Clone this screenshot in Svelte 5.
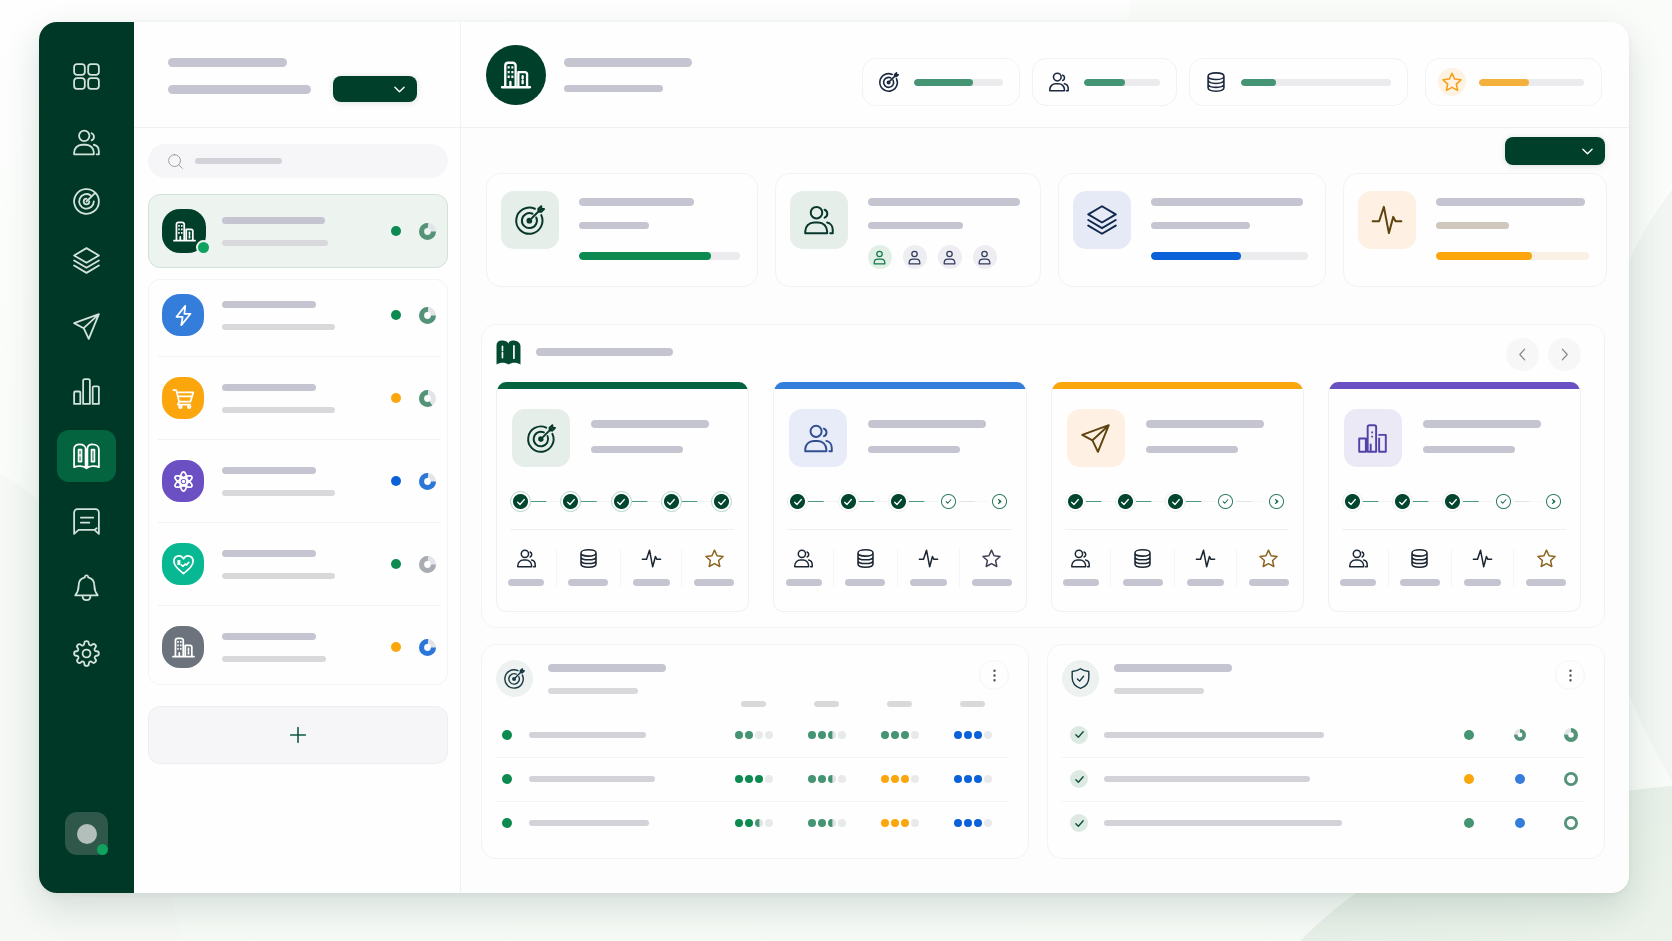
<script lang="ts">
    type Shape = { d: string, fill?: string };

    //All icons share a 24x24 box. d is stroked, fill is painted solid
    const icons: Record<string, Shape> = {
        grid: { d: "M3.500 1h4.500a2.500 2.500 0 0 1 2.500 2.500v4.500a2.500 2.500 0 0 1-2.500 2.500H3.500A2.500 2.500 0 0 1 1 8V3.500A2.500 2.500 0 0 1 3.500 1zM16 1h4.500A2.500 2.500 0 0 1 23 3.500V8a2.500 2.500 0 0 1-2.500 2.500H16A2.500 2.500 0 0 1 13.500 8V3.500A2.500 2.500 0 0 1 16 1zM3.500 13.500H8a2.500 2.500 0 0 1 2.500 2.500v4.500A2.500 2.500 0 0 1 8 23H3.500A2.500 2.500 0 0 1 1 20.500V16a2.500 2.500 0 0 1 2.500-2.500zM16 13.500h4.500A2.500 2.500 0 0 1 23 16v4.500a2.500 2.500 0 0 1-2.500 2.500H16a2.500 2.500 0 0 1-2.500-2.500V16a2.500 2.500 0 0 1 2.500-2.500z" },
        users: { d: "M10 1.500a4.500 4.500 0 0 1 0 9.200 4.500 4.500 0 0 1 0-9.200zM1 22.500v-1.500c0-4 3.200-7 7-7h3.500c3.800 0 7 3 7 7v1.500zM16.500 3.800a3.400 3.400 0 0 1 0 6.300M18.500 14c2.700.5 4.500 3 4.500 6v2.500h-2" },
        user: { d: "M12 2a4.300 4.300 0 0 1 0 8.600A4.300 4.300 0 0 1 12 2zM3.500 22v-1.500c0-3.600 2.700-6 6-6h5c3.300 0 6 2.400 6 6V22z" },
        radar: { d: "M19.800 4.200A11 11 0 1 0 23 12c0-3-1.200-5.800-3.200-7.800zM15.500 6.400A6.500 6.500 0 1 0 18.500 12M12 12l7.500-7.500M12 9.500a2.500 2.500 0 1 0 2.500 2.500" },
        target: { d: "M15.900 3A10.500 10.500 0 1 0 21 8.100M14 7A6 6 0 1 0 17 10M11.500 11a1.500 1.500 0 1 0 1.500 1.500M11.500 12.500L20 4M18.700 5.200V3L21 1v2.200h2.200L21 5.400z" },
        layers: { d: "M12 1l11 6.500L12 14 1 7.500zM1 12l11 6.500L23 12M1 16.500L12 23l11-6.500" },
        send: { d: "M23 1l-9 22-4.500-9.500L1 9zM23 1L9.500 13.500" },
        chart: { d: "M2 12h3.500a1 1 0 0 1 1 1v10H1V13a1 1 0 0 1 1-1zM10.500 1h3A1.500 1.500 0 0 1 15 2.500V23H9V2.500A1.500 1.500 0 0 1 10.500 1zM18.500 7.500H22a1 1 0 0 1 1 1V23h-5.500V8.500a1 1 0 0 1 1-1z" },
        towers: { d: "M1 12h5.500v11H1zM8 23V2.500A1.500 1.500 0 0 1 9.500 1h4A1.500 1.500 0 0 1 15 2.500V23h-4M8 23h2.500v-6M17.500 9H23v14h-5.500V12", fill: "M11 6.200h1.400v1.400H11zM11 9.800h1.400v1.400H11z" },
        book: { d: "M1 21.500V5c0-2.300 2-3.800 5-3.800S11.200 3 11.200 5v16M12.800 21V5c0-2.300 1.700-3.800 4.500-3.800C20.500 1.200 23 3 23 5.500v16c-3-1.300-8-1.500-11 1-3-2.500-8-2.300-11-1M5 6h2.500v10.500H5zM16.500 6H19v10.500h-2.500z", fill: "M5.500 10h1.500v2H5.500z" },
        bookSolid: { d: "M6.200 6v4M6.200 12v5M17.200 5.500v12", fill: "M.5 23.500V5C.5 2 2.500.5 5.500.5s6 1 6.300 3.200C12.300 1.500 14 .5 16.500.5c3.500 0 7 2 7 5.500v17.500c-3.500-2-8-2.200-11.500 0-3.500-2.200-8-2-11.500 0z" },
        message: { d: "M1 23V4a3 3 0 0 1 3-3h16a3 3 0 0 1 3 3v19l-4-3.500H5zM7 8.500h11M7 13h7.500M19 19.500l2-1.500" },
        bell: { d: "M12 1.200a1.500 1.500 0 0 1 1.500 1.800c3.500.8 5.500 3.500 5.500 7.500 0 4.500 1 6 3 8.500H2c2-2.500 3-4 3-8.500C5 6.500 7 3.800 10.500 3A1.500 1.500 0 0 1 12 1.200zM8.500 19.500c0 5 7 5 7 0" },
        gear: { d: "M12 8.500a3.500 3.500 0 0 1 0 7 3.500 3.500 0 0 1 0-7zM19.400 15a1.650 1.650 0 0 0 .33 1.820l.06.06a2 2 0 0 1-2.830 2.830l-.06-.06a1.650 1.650 0 0 0-2.820 1.180V21a2 2 0 0 1-4 0v-.09A1.650 1.650 0 0 0 7.180 19.730l-.06.06a2 2 0 0 1-2.830-2.830l.06-.06A1.650 1.650 0 0 0 3.170 14H3a2 2 0 0 1 0-4h.09A1.650 1.650 0 0 0 4.270 7.180l-.06-.06a2 2 0 0 1 2.830-2.830l.06.06A1.650 1.650 0 0 0 10 3.090V3a2 2 0 0 1 4 0v.09a1.650 1.650 0 0 0 2.820 1.180l.06-.06a2 2 0 0 1 2.830 2.830l-.06.06A1.650 1.650 0 0 0 20.910 10H21a2 2 0 0 1 0 4h-.09a1.650 1.650 0 0 0-1.510 1z" },
        building: { d: "M0 22.500h24M2.800 22V4a2.500 2.500 0 0 1 2.500-2.500h3.900A2.500 2.500 0 0 1 11.700 4v18M14 22V9.500h5.500a2 2 0 0 1 2 2V22M17.700 13v2M17.700 17v2M7.200 18v3", fill: "M4.800 4.500h1.800v2H4.800zM8 4.500h1.800v2H8zM4.800 8.500h1.800v2H4.800zM8 8.500h1.800v2H8zM4.800 12.500h1.800v2H4.800zM8 12.500h1.800v2H8z" },
        bolt: { d: "M14 1L4 13.500h7L9.500 23 20 10h-7z" },
        cart: { d: "M.5 2.500h3.200L7 15.500h13L23.200 5H4.300M5.500 9.500h16M7 15.500L5.500 19h14M8.500 20a1.500 1.500 0 0 1 0 3 1.500 1.500 0 0 1 0-3zM18.500 20a1.500 1.500 0 0 1 0 3 1.500 1.500 0 0 1 0-3z" },
        atom: { d: "M12 1a4 11 0 0 1 0 22 4 11 0 0 1 0-22M21.530 6.500A4 11 60 0 1 2.470 17.500 4 11 60 0 1 21.530 6.500M21.530 17.500A4 11 120 0 1 2.470 6.500 4 11 120 0 1 21.530 17.500", fill: "M12 10a2 2 0 0 1 0 4 2 2 0 0 1 0-4z" },
        heart: { d: "M12 22.500C5 16.500 1 13 1 8.300 1 1.500 9 .2 12 5.500 15 .2 23 1.500 23 8.300c0 4.700-4 8.200-11 14.200zM9.500 12.500l2 1.500 2.500-2.500 1.500 1 2.500-3", fill: "M5 7h3.500v5.500H5z" },
        database: { d: "M12 1c5.500 0 9.500 1.500 9.500 4S17.500 9 12 9 2.500 7.500 2.500 5 6.500 1 12 1zM2.500 5v14c0 2.500 4 4 9.500 4s9.500-1.500 9.500-4V5M2.500 9.700c0 2.500 4 4 9.500 4s9.500-1.500 9.500-4M2.500 14.400c0 2.500 4 4 9.500 4s9.500-1.500 9.500-4" },
        star: { d: "M12 1.500l3.200 7 7.600.9-5.600 5.200 1.500 7.500L12 18.400l-6.700 3.700 1.500-7.500L1.200 9.400l7.600-.9z" },
        pulse: { d: "M.5 13h5.200L9.500 1.500 13.500 22.500l3.500-13 1.800 3.500h4.700" },
        shield: { d: "M12 .8c3 2.200 6 3 9.500 3.200V11c0 6-3.500 10-9.500 12.300C6 21 2.500 17 2.500 11V4C6 3.800 9 3 12 .8zM8.500 12.500l2.500 2.500 4.500-5.500" },
        search: { d: "M10.500 1a9.500 9.500 0 0 1 0 19 9.500 9.500 0 0 1 0-19zM17.500 17.500L23 23" },
        plus: { d: "M12 1v22M1 12h22" },
        down: { d: "M2 7l10 10L22 7" },
        left: { d: "M16 2L7 12l9 10" },
        right: { d: "M8 2l9 10-9 10" },
        play: { d: "M8 5l9 7-9 7", fill: "M8 4l9 8-9 8 3-8z" },
        check: { d: "M4 12.500l5.500 5.500L20 6" },
        dots: { d: "", fill: "M12 1a2.200 2.200 0 0 1 0 4.400A2.200 2.200 0 0 1 12 1zM12 9.800a2.200 2.200 0 0 1 0 4.400 2.200 2.200 0 0 1 0-4.400zM12 18.600a2.200 2.200 0 0 1 0 4.400 2.200 2.200 0 0 1 0-4.400z" }
    };

    const navGroups: { tight: boolean, items: string[] }[] = [
        { tight: false, items: ["grid"] },
        { tight: true, items: ["users", "radar", "layers"] },
        { tight: false, items: ["send", "chart", "book", "message"] },
        { tight: false, items: ["bell"] },
        { tight: false, items: ["gear"] }
    ];
    let activeNav = $state("book");

    const accounts = [
        { icon: "bolt", color: "blue", sub: 113, status: "green", ring: "sage", share: 75 },
        { icon: "cart", color: "amber", sub: 113, status: "amber", ring: "sage", share: 60 },
        { icon: "atom", color: "violet", sub: 113, status: "royal", ring: "blue", share: 75 },
        { icon: "heart", color: "teal", sub: 113, status: "green", ring: "grey", share: 75 },
        { icon: "building", color: "slate", sub: 104, status: "amber", ring: "blue", share: 75 }
    ];

    const chips = [
        { icon: "target", value: 66, color: "sage" },
        { icon: "users", value: 53, color: "sage" },
        { icon: "database", value: 23, color: "sage" },
        { icon: "star", value: 48, color: "sun" }
    ];

    const stats = [
        { icon: "target", tint: "mint", title: 115, sub: 70, value: 82, color: "green" },
        { icon: "users", tint: "mint", title: 152, sub: 95, value: 0, color: "" },
        { icon: "layers", tint: "sky", title: 152, sub: 99, value: 57, color: "royal" },
        { icon: "pulse", tint: "peach", title: 149, sub: 73, value: 63, color: "amber" }
    ];

    const modules = [
        { icon: "target", tint: "mint", edge: "forest", done: 5, star: "gold" },
        { icon: "users", tint: "iris", edge: "blue", done: 3, star: "plum" },
        { icon: "send", tint: "peach", edge: "amber", done: 3, star: "gold" },
        { icon: "towers", tint: "lilac", edge: "violet", done: 3, star: "gold" }
    ];
    const metrics = [
        { icon: "users", width: 36 },
        { icon: "database", width: 40 },
        { icon: "pulse", width: 37 },
        { icon: "star", width: 40 }
    ];

    //Each score is a colour and how many of the four dots are lit, .5 lights half a dot
    const scores = [
        { width: 117, cells: [["sage", 2], ["sage", 2.5], ["sage", 3], ["royal", 3]] },
        { width: 126, cells: [["green", 3], ["sage", 2.5], ["amber", 3], ["royal", 3]] },
        { width: 120, cells: [["green", 2.5], ["sage", 2.5], ["amber", 3], ["royal", 3]] }
    ] as { width: number, cells: [string, number][] }[];

    const checks = [
        { width: 220, dot: "sage", second: "ring", share: 75 },
        { width: 206, dot: "amber", second: "blue", share: 100 },
        { width: 238, dot: "sage", second: "blue", share: 100 }
    ];

    function dotClass(color: string, lit: number, index: number) {
        if (index + 1 <= lit) return "pip bg-" + color;
        if (index < lit) return "pip half";
        return "pip";
    }
</script>

{#snippet icon(name: string, size: number)}
    <svg class="icon" width={size} height={size} viewBox="0 0 24 24" aria-hidden="true">
        {#if icons[name].fill}<path class="solid" d={icons[name].fill} />{/if}
        <path class="line" d={icons[name].d} />
    </svg>
{/snippet}

{#snippet bar(width: number, size: string)}
    <span class="bar {size}" style:width={width + "px"}></span>
{/snippet}

{#snippet meter(value: number, color: string, size: string)}
    <span class="meter {size}"><span class="bg-{color}" style:width={value + "%"}></span></span>
{/snippet}

{#snippet ring(color: string, share: number, size: number, thick: number, fromTop: boolean)}
    <svg class="ring ring-{color}" class:from-top={fromTop} width={size} height={size} viewBox="0 0 20 20" aria-hidden="true">
        <circle class="track" cx="10" cy="10" r={10 - thick / 2} stroke-width={thick} />
        <circle cx="10" cy="10" r={10 - thick / 2} stroke-width={thick} pathLength="100"
            stroke-dasharray="{share} 100" stroke-dashoffset={fromTop ? 0 : share - 75} />
    </svg>
{/snippet}

{#snippet picker(label: string)}
    <label class="picker">
        <select aria-label={label}><option value=""></option></select>
        {@render icon("down", 11)}
    </label>
{/snippet}

<svg class="backdrop" viewBox="0 0 1672 941" preserveAspectRatio="none" aria-hidden="true">
    <defs>
        <linearGradient id="page" x1="0" y1="0" x2="0" y2="1">
            <stop offset="0" stop-color="#fdfefd" />
            <stop offset="1" stop-color="#f6faf6" />
        </linearGradient>
        <linearGradient id="hill" x1="0" y1="0" x2="1" y2="1">
            <stop offset="0" stop-color="#e2ece5" />
            <stop offset="1" stop-color="#ebf3ea" />
        </linearGradient>
    </defs>
    <rect width="1672" height="941" fill="url(#page)" />
    <path d="M1130 0C1124 60 1150 180 1300 300S1560 420 1672 180V0z" fill="#fafcf9" />
    <path d="M1672 190C1560 330 1560 600 1672 780z" fill="#f1f6f3" />
    <path d="M0 474C60 500 120 600 180 941H0z" fill="#f5f8f5" />
    <path d="M1300 941C1380 860 1500 800 1672 786V941z" fill="url(#hill)" />
</svg>

<div class="window">
    <nav class="rail">
        {#each navGroups as group}
            <div class="rail-group" class:tight={group.tight}>
                {#each group.items as item}
                    <button class:active={activeNav == item} aria-label={item} onclick={() => activeNav = item}>
                        {@render icon(item, 27)}
                    </button>
                {/each}
            </div>
        {/each}
        <button class="profile" aria-label="Profile"><span class="face"></span><span class="online"></span></button>
    </nav>

    <aside class="side">
        <header class="side-head">
            <div class="stack wide">
                {@render bar(119, "xl")}
                {@render bar(143, "xl")}
            </div>
            {@render picker("Workspace")}
        </header>

        <div class="side-body">
            <label class="search">
                {@render icon("search", 15)}
                {@render bar(87, "sm mid")}
                <input type="search" aria-label="Search" />
            </label>

            <button class="account selected" aria-label="Current account">
                <span class="logo bg-pine">{@render icon("building", 21)}<span class="online"></span></span>
                <span class="stack">
                    {@render bar(103, "md")}
                    {@render bar(106, "sm pale")}
                </span>
                <span class="dot bg-green"></span>
                {@render ring("sage", 75, 17, 6, false)}
            </button>

            <div class="accounts">
                {#each accounts as account}
                    <button class="account" aria-label={account.icon}>
                        <span class="logo bg-{account.color}">{@render icon(account.icon, 21)}</span>
                        <span class="stack">
                            {@render bar(94, "md")}
                            {@render bar(account.sub, "sm pale")}
                        </span>
                        <span class="dot bg-{account.status}"></span>
                        {@render ring(account.ring, account.share, 17, 6, false)}
                    </button>
                {/each}
            </div>

            <button class="add" aria-label="Add account">{@render icon("plus", 16)}</button>
        </div>
    </aside>

    <main>
        <header class="main-head">
            <span class="crest">{@render icon("building", 28)}</span>
            <div class="stack wide">
                {@render bar(128, "xl")}
                {@render bar(99, "md")}
            </div>
            <div class="chips">
                {#each chips as chip}
                    <div class="chip" class:starred={chip.icon == "star"}>
                        <span class="chip-icon">{@render icon(chip.icon, 20)}</span>
                        {@render meter(chip.value, chip.color, "md")}
                    </div>
                {/each}
            </div>
        </header>

        <div class="content">
            <div class="toolbar">{@render picker("Period")}</div>

            <section class="stats">
                {#each stats as stat}
                    <article class="stat">
                        <span class="tile {stat.tint}">{@render icon(stat.icon, 30)}</span>
                        <div class="stat-text">
                            {@render bar(stat.title, "lg")}
                            {@render bar(stat.sub, "md " + stat.tint)}
                            {#if stat.value}
                                {@render meter(stat.value, stat.color, "lg " + stat.tint)}
                            {:else}
                                <div class="people">
                                    {#each {length: 4} as _, i}
                                        <span class="person">{@render icon("user", 15)}</span>
                                    {/each}
                                </div>
                            {/if}
                        </div>
                    </article>
                {/each}
            </section>

            <section class="panel modules">
                <header class="modules-head">
                    {@render icon("bookSolid", 25)}
                    {@render bar(137, "lg")}
                    <div class="arrows">
                        <button aria-label="Previous">{@render icon("left", 13)}</button>
                        <button aria-label="Next">{@render icon("right", 13)}</button>
                    </div>
                </header>
                <div class="cards">
                    {#each modules as card}
                        <article class="card">
                            <div class="edge bg-{card.edge}"></div>
                            <div class="card-top">
                                <span class="tile {card.tint}">{@render icon(card.icon, 29)}</span>
                                <div class="stack wide">
                                    {@render bar(118, "lg")}
                                    {@render bar(92, "md")}
                                </div>
                            </div>
                            <ol class="steps" class:complete={card.done == 5}>
                                {#each {length: 5} as _, i}
                                    <li class:done={i < card.done}>
                                        <span class="step">{@render icon(i == 4 && card.done < 5 ? "play" : "check", i < card.done ? 10 : 7)}</span>
                                    </li>
                                {/each}
                            </ol>
                            <hr />
                            <div class="metrics">
                                {#each metrics as metric}
                                    <div class="metric" class:gold={metric.icon == "star" && card.star == "gold"}>
                                        {@render icon(metric.icon, 19)}
                                        {@render bar(metric.width, "md")}
                                    </div>
                                {/each}
                            </div>
                        </article>
                    {/each}
                </div>
            </section>

            <div class="bottom">
                <section class="panel list">
                    <header class="list-head">
                        <span class="badge">{@render icon("target", 21)}</span>
                        <div class="stack">
                            {@render bar(118, "lg")}
                            {@render bar(90, "sm pale")}
                        </div>
                        <button class="more" aria-label="More">{@render icon("dots", 13)}</button>
                    </header>
                    <table>
                        <thead>
                            <tr>
                                <td class="status"></td>
                                <td></td>
                                {#each {length: 4} as _}
                                    <th class="score" scope="col">{@render bar(25, "sm pale")}</th>
                                {/each}
                            </tr>
                        </thead>
                        <tbody>
                            {#each scores as row}
                                <tr>
                                    <td class="status"><span class="dot bg-green"></span></td>
                                    <td>{@render bar(row.width, "sm mid")}</td>
                                    {#each row.cells as [color, lit]}
                                        <td class="score">
                                            <span class="pips">
                                                {#each {length: 4} as _, i}<span class={dotClass(color, lit, i)}></span>{/each}
                                            </span>
                                        </td>
                                    {/each}
                                </tr>
                            {/each}
                        </tbody>
                    </table>
                </section>

                <section class="panel list">
                    <header class="list-head">
                        <span class="badge">{@render icon("shield", 21)}</span>
                        <div class="stack">
                            {@render bar(118, "lg")}
                            {@render bar(90, "sm pale")}
                        </div>
                        <button class="more" aria-label="More">{@render icon("dots", 13)}</button>
                    </header>
                    <table class="checks">
                        <tbody>
                            {#each checks as row}
                                <tr>
                                    <td class="tick"><span>{@render icon("check", 11)}</span></td>
                                    <td>{@render bar(row.width, "sm mid")}</td>
                                    <td class="mark"><span class="dot bg-{row.dot}"></span></td>
                                    <td class="mark">
                                        {#if row.second == "ring"}
                                            {@render ring("sage", 75, 12, 6, true)}
                                        {:else}
                                            <span class="dot bg-{row.second}"></span>
                                        {/if}
                                    </td>
                                    <td class="mark last">{@render ring("sage", row.share, 14, row.share == 100 ? 4 : 6, true)}</td>
                                </tr>
                            {/each}
                        </tbody>
                    </table>
                </section>
            </div>
        </div>
    </main>
</div>

<style>
    :global(body) {
        margin: 0;
        background: #f6faf6;
        font-family: Inter, "Liberation Sans", sans-serif;
    }

    * {
        box-sizing: border-box;
    }

    button {
        padding: 0;
        border: none;
        background: none;
        color: inherit;
        cursor: pointer;
    }

    .backdrop {
        position: fixed;
        inset: 0;
        width: 100%;
        height: 100%;
        z-index: -1;
    }

    .window {
        display: flex;
        min-height: calc(100vh - 70px);
        margin: 22px 43px 48px 39px;
        border-radius: 18px;
        background: #fefefe;
        overflow: hidden;
        box-shadow: 0 14px 36px rgba(0, 60, 40, 0.14), 0 2px 8px rgba(0, 60, 40, 0.05);
    }

    .icon {
        display: block;
        flex-shrink: 0;
        overflow: visible;
    }

    .line {
        fill: none;
        stroke: currentColor;
        stroke-width: 1.6;
        stroke-linecap: round;
        stroke-linejoin: round;
    }

    .solid {
        fill: currentColor;
    }

    /* Skeleton bars */
    .bar {
        display: block;
        max-width: 100%;
        border-radius: 5px;
        background: #c5c5d1;
    }

    .sm { height: 6px; }
    .md { height: 7px; }
    .lg { height: 8px; }
    .xl { height: 9px; }

    .bar.pale { background: #d9d9dc; }
    .bar.mid { background: #d2d2d8; }
    .bar.peach { background: #d0c7bd; }

    .stack {
        display: flex;
        flex-direction: column;
        gap: 16px;
    }

    .stack.wide {
        gap: 18px;
    }

    .meter {
        display: block;
        flex: 1;
        border-radius: 5px;
        background: #ebebed;
        overflow: hidden;
    }

    .meter.peach { background: #faf0e3; }

    .meter span {
        display: block;
        height: 100%;
        border-radius: 5px;
    }

    .bg-green { background: #0c8a50; }
    .bg-sage { background: #459473; }
    .bg-forest { background: #04633f; }
    .bg-pine { background: #013f2a; }
    .bg-blue { background: #347ddb; }
    .bg-royal { background: #0b62d8; }
    .bg-amber { background: #fba60d; }
    .bg-sun { background: #f4b03c; }
    .bg-violet { background: #6b50c4; }
    .bg-teal { background: #08b893; }
    .bg-slate { background: #6c737c; }

    .dot {
        display: block;
        width: 10px;
        height: 10px;
        border-radius: 50%;
    }

    .ring {
        display: block;
        fill: none;
    }

    .from-top { transform: rotate(-90deg); }
    .ring circle { stroke: #539479; }
    .ring-blue circle { stroke: #2b76da; }
    .ring-grey circle { stroke: #aaacb3; }
    .ring circle.track { stroke: #e2e5e7; }

    .picker {
        display: grid;
        align-items: center;
        color: #ffffff;
        filter: drop-shadow(0 1px 3px rgba(0, 60, 40, 0.15));
    }

    .picker select {
        grid-area: 1 / 1;
        width: 84px;
        height: 26px;
        border: none;
        border-radius: 8px;
        background: #003f29;
        color: inherit;
        appearance: none;
    }

    .picker .icon {
        grid-area: 1 / 1;
        justify-self: end;
        margin-right: 12px;
        pointer-events: none;
    }

    .picker .line {
        stroke-width: 3;
    }

    /* Navigation rail */
    .rail {
        display: flex;
        flex-direction: column;
        align-items: center;
        gap: 14px;
        flex-shrink: 0;
        width: 95px;
        padding: 28px 0 38px;
        background: #003827;
        color: #d3e2da;
    }

    .rail-group {
        display: flex;
        flex-direction: column;
        gap: 13px;
    }

    .rail-group.tight {
        gap: 7px;
    }

    .rail-group button {
        display: grid;
        place-items: center;
        width: 59px;
        height: 52px;
        border-radius: 12px;
    }

    .rail-group button.active {
        background: #046440;
        color: #ffffff;
    }

    .profile {
        position: relative;
        display: grid;
        place-items: center;
        width: 43px;
        height: 43px;
        margin-top: auto;
        border-radius: 12px;
        background: #2f584a;
    }

    .face {
        width: 20px;
        height: 20px;
        border-radius: 50%;
        background: #b3bfba;
    }

    .online {
        position: absolute;
        right: 0;
        bottom: 0;
        width: 11px;
        height: 11px;
        border-radius: 50%;
        background: #0fa35f;
    }

    /* Account list */
    .side {
        flex-shrink: 0;
        width: 327px;
        border-right: 1px solid #f1f2f3;
    }

    .side-head {
        display: flex;
        justify-content: space-between;
        align-items: flex-end;
        height: 106px;
        padding: 0 43px 25px 34px;
        border-bottom: 1px solid #eff0f1;
    }

    .side-head .stack {
        padding-bottom: 8px;
    }

    .side-body {
        display: flex;
        flex-direction: column;
        padding: 16px 12px 0 14px;
    }

    .search {
        display: flex;
        align-items: center;
        gap: 12px;
        height: 34px;
        padding: 0 20px;
        border-radius: 17px;
        background: #f6f6f8;
        color: #9b9ea3;
    }

    .search input {
        flex: 1;
        min-width: 0;
        border: none;
        background: none;
        outline: none;
        font: inherit;
    }

    .account {
        display: grid;
        grid-template-columns: 42px 1fr 10px 17px;
        align-items: center;
        column-gap: 18px;
        width: 100%;
        padding: 20px 0;
    }

    .account .dot {
        justify-self: end;
    }

    .account.selected {
        height: 74px;
        margin-top: 16px;
        padding: 0 11px 0 13px;
        border: 1px solid #cfe3d8;
        border-radius: 12px;
        background: #edf3ef;
    }

    .logo {
        position: relative;
        display: grid;
        place-items: center;
        width: 42px;
        height: 42px;
        border-radius: 18px;
        color: #ffffff;
    }

    .selected .logo {
        width: 44px;
        height: 44px;
    }

    .logo .line, .crest .line {
        stroke-width: 2;
    }

    .logo .online {
        right: -5px;
        bottom: -2px;
        width: 15px;
        height: 15px;
        border: 2px solid #edf3ef;
    }

    .accounts {
        margin-top: 11px;
        padding: 0 6px 0 9px;
        border: 1px solid #f3f4f5;
        border-radius: 12px;
    }

    .accounts .account {
        padding-left: 4px;
        padding-right: 5px;
        border-bottom: 1px solid #f1f2f3;
    }

    .accounts .account:first-child {
        padding-top: 14px;
    }

    .accounts .account:last-child {
        padding-bottom: 16px;
        border-bottom: none;
    }

    .add {
        display: grid;
        place-items: center;
        height: 58px;
        margin-top: 21px;
        border: 1px solid #eeeef1;
        border-radius: 12px;
        background: #f6f6f8;
        color: #0f5a41;
    }

    .add .line {
        stroke-width: 2.4;
    }

    /* Main column */
    main {
        flex: 1;
        min-width: 0;
    }

    .main-head {
        display: flex;
        align-items: center;
        gap: 18px;
        height: 106px;
        padding: 0 27px 0 25px;
        border-bottom: 1px solid #eff0f1;
    }

    .crest {
        display: grid;
        place-items: center;
        width: 60px;
        height: 60px;
        border-radius: 50%;
        background: #003f29;
        color: #ffffff;
    }

    .chips {
        display: grid;
        grid-template-columns: 158fr 145fr 218fr 182fr;
        gap: 12px;
        flex: 0 1 740px;
        margin: 15px 0 0 auto;
    }

    .chip {
        display: flex;
        align-items: center;
        gap: 15px;
        min-width: 0;
        height: 48px;
        padding: 0 16px;
        border: 1px solid #f1f2f4;
        border-radius: 14px;
        color: #1c2940;
    }

    .chip .line {
        stroke-width: 1.9;
    }

    .chip.starred {
        gap: 13px;
        margin-left: 5px;
        padding: 0 17px 0 12px;
    }

    .starred .chip-icon {
        display: grid;
        place-items: center;
        width: 28px;
        height: 28px;
        border-radius: 50%;
        background: #fef2e2;
        color: #f5a11d;
    }

    .content {
        padding: 9px 24px 33px 20px;
        background: #fdfdfd;
    }

    .toolbar {
        display: flex;
        justify-content: flex-end;
    }

    .toolbar .picker select {
        width: 100px;
        height: 28px;
    }

    .stats {
        display: grid;
        grid-template-columns: 272fr 267fr 268fr 264fr;
        gap: 17px;
        margin: 8px -2px 0 5px;
    }

    .stat {
        display: flex;
        gap: 20px;
        height: 114px;
        padding: 17px 17px 0 14px;
        border: 1px solid #f1f2f4;
        border-radius: 15px;
        background: #fefefe;
    }

    .tile {
        display: grid;
        place-items: center;
        flex-shrink: 0;
        width: 58px;
        height: 58px;
        border-radius: 13px;
    }

    .tile.mint { background: #e5eee9; color: #08382b; }
    .tile.sky { background: #e5eaf6; color: #11284f; }
    .tile.iris { background: #e7ecf8; color: #2f4f8f; }
    .tile.peach { background: #fef1e3; color: #5e430f; }
    .tile.lilac { background: #ece9f7; color: #5340a8; }

    .stat-text {
        display: flex;
        flex-direction: column;
        flex: 1;
        min-width: 0;
        gap: 16px;
        padding-top: 7px;
    }

    .stat-text .meter {
        flex: none;
        margin-top: 7px;
    }

    .people {
        display: flex;
        gap: 11px;
    }

    .person {
        display: grid;
        place-items: center;
        width: 24px;
        height: 24px;
        border-radius: 50%;
        background: #ededf2;
        color: #303a5c;
    }

    .person .line {
        stroke-width: 2;
    }

    .person:first-child {
        background: #e1efe7;
        color: #137a4c;
    }

    .panel {
        border: 1px solid #f2f3f4;
        border-radius: 15px;
        background: #fefefe;
    }

    .modules {
        margin-top: 37px;
        padding: 13px 23px 15px 14px;
    }

    .modules-head {
        display: flex;
        align-items: center;
        gap: 15px;
        height: 28px;
        margin-bottom: 16px;
        color: #044a31;
    }

    .modules-head > .icon .line {
        stroke: #ffffff;
    }

    .arrows {
        display: flex;
        align-self: flex-start;
        gap: 9px;
        margin-left: auto;
    }

    .arrows button {
        display: grid;
        place-items: center;
        width: 33px;
        height: 33px;
        border-radius: 50%;
        background: #f7f7f8;
        color: #83868b;
    }

    .arrows .line {
        stroke-width: 2.2;
    }

    .cards {
        display: grid;
        grid-template-columns: repeat(4, 1fr);
        gap: 24px;
    }

    .card {
        height: 230px;
        border: 1px solid #f1f1f4;
        border-top: none;
        border-radius: 10px;
        overflow: hidden;
    }

    .edge {
        height: 7px;
    }

    .card-top {
        display: flex;
        gap: 21px;
        padding: 20px 15px 0 15px;
    }

    .card-top .stack {
        padding-top: 11px;
    }

    .steps {
        display: grid;
        grid-template-columns: repeat(4, 1fr) 21px;
        margin: 24px 16px 0 13px;
        padding: 0;
        list-style: none;
    }

    .steps li {
        display: flex;
        align-items: center;
        height: 21px;
    }

    .step {
        display: grid;
        place-items: center;
        flex-shrink: 0;
        width: 21px;
        height: 21px;
        border-radius: 50%;
        color: #0f6b48;
        border: 2px solid #fefefe;
        background: radial-gradient(circle, #ffffff 6px, #2c7c5c 7px, #fefefe 8px);
    }

    .step .line {
        stroke-width: 3.5;
    }

    .done .step {
        border: 1px solid #e9eeeb;
        background: radial-gradient(circle, #02452e 7px, #ffffff 8px);
        color: #ffffff;
    }

    .done .step .line {
        stroke-width: 3;
    }

    .complete .step {
        border-color: #b3d4c5;
    }

    /* The connector is solid near its own step and fades before the next */
    .steps li:not(:last-child)::after {
        content: "";
        flex: 1;
        height: 1px;
        background: linear-gradient(90deg, #dfe5e2 50%, #f6f7f7 55%);
    }

    .steps .done:not(:last-child)::after {
        background: linear-gradient(90deg, #4d9c7b 50%, #f1f3f2 55%);
    }

    hr {
        height: 1px;
        margin: 17px 14px 0 13px;
        border: none;
        background: #eff0f1;
    }

    .metrics {
        display: grid;
        grid-template-columns: 59fr 64fr 62fr 65fr;
        padding: 19px 2px 0 0;
    }

    .metric {
        display: flex;
        flex-direction: column;
        align-items: center;
        gap: 11px;
        height: 38px;
        color: #1c2733;
    }

    .metric .line {
        stroke-width: 1.9;
    }

    .metric .bar {
        flex-shrink: 0;
    }

    .metric + .metric {
        border-left: 1px solid #f4f5f6;
    }

    .metric:last-child {
        color: #3f4257;
    }

    .metric.gold:last-child {
        color: #8d6420;
    }

    /* Bottom panels */
    .bottom {
        display: grid;
        grid-template-columns: 548fr 558fr;
        gap: 18px;
        margin-top: 16px;
    }

    .list {
        height: 215px;
        padding: 15px 19px 0 14px;
    }

    .list-head {
        display: flex;
        gap: 15px;
        height: 35px;
    }

    .list-head .stack {
        padding-top: 4px;
    }

    .badge {
        display: grid;
        place-items: center;
        width: 37px;
        height: 37px;
        border-radius: 50%;
        background: #edf2f0;
        color: #163842;
    }

    .more {
        display: grid;
        place-items: center;
        width: 30px;
        height: 30px;
        margin-left: auto;
        border: 1px solid #f4f5f6;
        border-radius: 50%;
        color: #4a4f57;
    }

    table {
        width: 100%;
        border-collapse: collapse;
        table-layout: fixed;
    }

    td, th {
        height: 44px;
        padding: 0;
        border-bottom: 1px solid #f3f4f5;
    }

    thead td, thead th {
        height: 18px;
        border-bottom: none;
    }

    tbody tr:last-child td {
        border-bottom: none;
    }

    .checks {
        margin-top: 18px;
    }

    .status {
        width: 33px;
    }

    .status .dot {
        margin-left: 6px;
    }

    .score {
        width: 73px;
    }

    .score .bar {
        margin: 0 auto;
    }

    .pips {
        display: flex;
        justify-content: center;
        gap: 2px;
    }

    .pip {
        width: 8px;
        height: 8px;
        border-radius: 50%;
    }

    .pip:not([class*="bg-"]) {
        background: #e8e9ea;
    }

    .pip.half {
        background: linear-gradient(90deg, #459473 50%, #dfe3e2 60%);
    }

    .tick {
        width: 42px;
    }

    .tick span {
        display: grid;
        place-items: center;
        width: 18px;
        height: 18px;
        margin-left: 8px;
        border-radius: 50%;
        background: #dde9e3;
        color: #0a5138;
    }

    .tick .line {
        stroke-width: 3;
    }

    .mark {
        width: 51px;
    }

    .mark > .dot, .mark > .ring {
        margin: 0 auto;
    }

    .mark.last {
        width: 40px;
    }

    .mark.last > .ring {
        margin: 0 7px 0 auto;
    }
</style>
